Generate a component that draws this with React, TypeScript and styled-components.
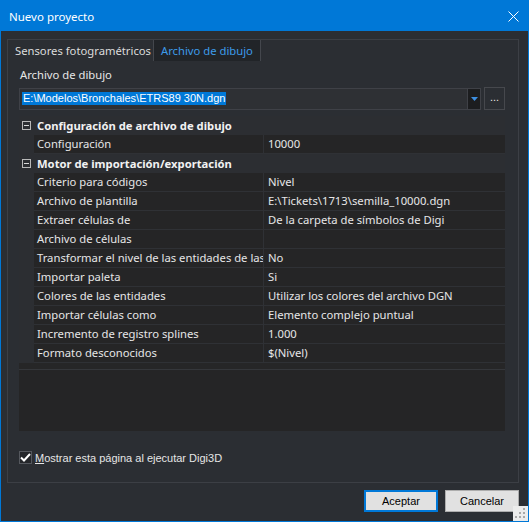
import React from 'react';
import styled, { createGlobalStyle } from 'styled-components';

const uiFont = '"Noto Sans", "Segoe UI", sans-serif';
const formsFont = '"Liberation Sans", Arial, sans-serif';

const GlobalStyle = createGlobalStyle`
  html, body {
    margin: 0;
    padding: 0;
    background: #2b2e33;
  }
  * {
    box-sizing: border-box;
  }
`;

const Window = styled.div`
  position: relative;
  width: 529px;
  height: 522px;
  border: 1px solid #0078d7;
  background-color: #2b2e33;
  display: flex;
  flex-direction: column;
  font-family: ${uiFont};
  font-size: 11.25px;
  color: #e6e6e6;
  overflow: hidden;
`;

const TitleBar = styled.div`
  height: 30px;
  flex: none;
  background-color: #0078d7;
  display: flex;
  align-items: center;
  justify-content: space-between;
  padding: 0 9px 0 8px;
  color: #fff;
  font-size: 11.5px;
`;

const CloseButton = styled.div`
  width: 12px;
  height: 12px;
  display: flex;
  align-items: center;
  justify-content: center;
`;

const Body = styled.div`
  flex: 1;
  display: flex;
  flex-direction: column;
  padding: 8px 9px 0 6px;
`;

const Panel = styled.div`
  height: 444px;
  border: 1px solid #3c3f45;
  display: flex;
  flex-direction: column;
`;

const TabStrip = styled.div`
  height: 21px;
  display: flex;
  flex: none;
`;

const Tab = styled.div<{ $active?: boolean; $width: number }>`
  width: ${(p) => p.$width}px;
  height: 21px;
  display: flex;
  align-items: center;
  padding-left: 7px;
  background-color: ${(p) => (p.$active ? '#212428' : 'transparent')};
  border-left: ${(p) => (p.$active ? '1px solid #44474d' : 'none')};
  border-right: ${(p) => (p.$active ? '1px solid #44474d' : 'none')};
  color: ${(p) => (p.$active ? '#3d9be9' : '#dcdcdc')};
  white-space: nowrap;
  overflow: hidden;
`;

const TabContent = styled.div`
  flex: 1;
  display: flex;
  flex-direction: column;
  padding: 6px 13px 0 11px;
`;

const FieldLabel = styled.div`
  height: 15px;
  line-height: 15px;
  padding-left: 1px;
`;

const FileRow = styled.div`
  display: flex;
  align-items: center;
  gap: 3px;
  margin-top: 5px;
`;

const Combo = styled.div`
  width: 462px;
  height: 22px;
  border: 1px solid #3f4147;
  background-color: #2e3034;
  display: flex;
  align-items: center;
  justify-content: space-between;
  padding-left: 2px;
`;

const ComboText = styled.span`
  font-family: ${formsFont};
  font-size: 11px;
  line-height: 13px;
  background-color: #0078d7;
  color: #fff;
  padding: 0 1px;
`;

const ComboArrow = styled.div`
  width: 13px;
  height: 20px;
  background-color: #1c1d1f;
  border-left: 1px solid #3f4147;
  display: flex;
  align-items: center;
  justify-content: center;
`;

const EllipsisButton = styled.div`
  width: 21px;
  height: 23px;
  border: 1px solid #46484d;
  display: flex;
  align-items: center;
  justify-content: center;
  font-family: ${formsFont};
  font-size: 11px;
  color: #e6e6e6;
  padding-bottom: 4px;
`;

const Grid = styled.div`
  margin-top: 6px;
  width: 486px;
  height: 254px;
  background-color: #262627;
  border-bottom: 1px solid #35373b;
  display: flex;
  flex-direction: column;
`;

const CategoryRow = styled.div`
  height: 19px;
  display: flex;
  align-items: center;
  background-color: #2c2e32;
  font-weight: 700;
  color: #f2f2f2;
`;

const Toggle = styled.div`
  width: 15px;
  height: 19px;
  display: flex;
  align-items: center;
  padding-left: 3px;
  flex: none;
`;

const MinusBox = styled.div`
  position: relative;
  width: 9px;
  height: 9px;
  border: 1px solid #b9b9b9;

  &::after {
    content: '';
    position: absolute;
    left: 1px;
    top: 3px;
    width: 5px;
    height: 1px;
    background-color: #d8d8d8;
  }
`;

const CategoryTitle = styled.span`
  padding-left: 3px;
  white-space: nowrap;
`;

const PropertyRow = styled.div`
  height: 19px;
  display: grid;
  grid-template-columns: 15px 230px 1fr;
`;

const Margin = styled.div`
  background-color: #2c2e32;
`;

const Cell = styled.div<{ $name?: boolean }>`
  height: 19px;
  background-color: #252526;
  border-bottom: 1px solid #2f3135;
  border-right: ${(p) => (p.$name ? '1px solid #2f3135' : 'none')};
  padding-left: ${(p) => (p.$name ? '3px' : '4px')};
  line-height: 18px;
  white-space: nowrap;
  overflow: hidden;
`;

const Description = styled.div`
  width: 486px;
  height: 61px;
  background-color: #252526;
`;

const CheckRow = styled.label`
  display: flex;
  align-items: center;
  gap: 3px;
  margin-top: 20px;
  font-family: ${formsFont};
  font-size: 11px;
  color: #e6e6e6;
`;

const CheckBox = styled.div`
  width: 13px;
  height: 13px;
  border: 1px solid #55585e;
  background-color: #24262a;
  display: flex;
  align-items: center;
  justify-content: center;
`;

const Footer = styled.div`
  display: flex;
  justify-content: flex-end;
  gap: 7px;
  padding-top: 7px;
`;

const Button = styled.div<{ $default?: boolean }>`
  width: 74px;
  height: 22px;
  background-color: #e1e1e1;
  border: ${(p) => (p.$default ? '2px solid #0078d7' : '1px solid #adadad')};
  display: flex;
  align-items: center;
  justify-content: center;
  font-family: ${formsFont};
  font-size: 11px;
  color: #000;
`;

const SizeGrip = styled.div`
  position: absolute;
  right: 0;
  bottom: 0;
  width: 15px;
  height: 15px;
  background-color: #ececec;
  display: flex;
  align-items: center;
  justify-content: center;
`;

type Prop = { name: string; value: string };

const configProps: Prop[] = [{ name: 'Configuración', value: '10000' }];

const motorProps: Prop[] = [
  { name: 'Criterio para códigos', value: 'Nivel' },
  { name: 'Archivo de plantilla', value: 'E:\\Tickets\\1713\\semilla_10000.dgn' },
  { name: 'Extraer células de', value: 'De la carpeta de símbolos de Digi' },
  { name: 'Archivo de células', value: '' },
  { name: 'Transformar el nivel de las entidades de las', value: 'No' },
  { name: 'Importar paleta', value: 'Si' },
  { name: 'Colores de las entidades', value: 'Utilizar los colores del archivo DGN' },
  { name: 'Importar células como', value: 'Elemento complejo puntual' },
  { name: 'Incremento de registro splines', value: '1.000' },
  { name: 'Formato desconocidos', value: '$(Nivel)' },
];

const Category: React.FC<{ title: string; props: Prop[] }> = ({ title, props }) => (
  <>
    <CategoryRow>
      <Toggle>
        <MinusBox />
      </Toggle>
      <CategoryTitle>{title}</CategoryTitle>
    </CategoryRow>
    {props.map((p) => (
      <PropertyRow key={p.name}>
        <Margin />
        <Cell $name>{p.name}</Cell>
        <Cell>{p.value}</Cell>
      </PropertyRow>
    ))}
  </>
);

const App: React.FC = () => {
  return (
    <>
      <GlobalStyle />
      <Window>
        <TitleBar>
          <span>Nuevo proyecto</span>
          <CloseButton>
            <svg width="11" height="11" viewBox="0 0 11 11">
              <path d="M0.5 0.5 L10.5 10.5 M10.5 0.5 L0.5 10.5" stroke="#fff" strokeWidth="1" />
            </svg>
          </CloseButton>
        </TitleBar>
        <Body>
          <Panel>
            <TabStrip>
              <Tab $width={145}>Sensores fotogramétricos</Tab>
              <Tab $width={108} $active>
                Archivo de dibujo
              </Tab>
            </TabStrip>
            <TabContent>
              <FieldLabel>Archivo de dibujo</FieldLabel>
              <FileRow>
                <Combo>
                  <ComboText>E:\Modelos\Bronchales\ETRS89 30N.dgn</ComboText>
                  <ComboArrow>
                    <svg width="7" height="4" viewBox="0 0 7 4">
                      <path d="M0 0 H7 L3.5 4 Z" fill="#3d8fe0" />
                    </svg>
                  </ComboArrow>
                </Combo>
                <EllipsisButton>...</EllipsisButton>
              </FileRow>
              <Grid>
                <Category title="Configuración de archivo de dibujo" props={configProps} />
                <Category title="Motor de importación/exportación" props={motorProps} />
              </Grid>
              <Description />
              <CheckRow>
                <CheckBox>
                  <svg width="11" height="9" viewBox="0 0 11 9">
                    <path d="M1 4.5 L4 7.5 L10 1" stroke="#fff" strokeWidth="2" fill="none" />
                  </svg>
                </CheckBox>
                <span>
                  <u>M</u>ostrar esta página al ejecutar Digi3D
                </span>
              </CheckRow>
            </TabContent>
          </Panel>
          <Footer>
            <Button $default>Aceptar</Button>
            <Button>Cancelar</Button>
          </Footer>
        </Body>
        <SizeGrip>
          <svg width="11" height="11" viewBox="0 0 11 11">
            <rect x="8" y="0" width="2" height="2" fill="#a8a8a8" />
            <rect x="4" y="4" width="2" height="2" fill="#a8a8a8" />
            <rect x="8" y="4" width="2" height="2" fill="#a8a8a8" />
            <rect x="0" y="8" width="2" height="2" fill="#a8a8a8" />
            <rect x="4" y="8" width="2" height="2" fill="#a8a8a8" />
            <rect x="8" y="8" width="2" height="2" fill="#a8a8a8" />
          </svg>
        </SizeGrip>
      </Window>
    </>
  );
};

export default App;
